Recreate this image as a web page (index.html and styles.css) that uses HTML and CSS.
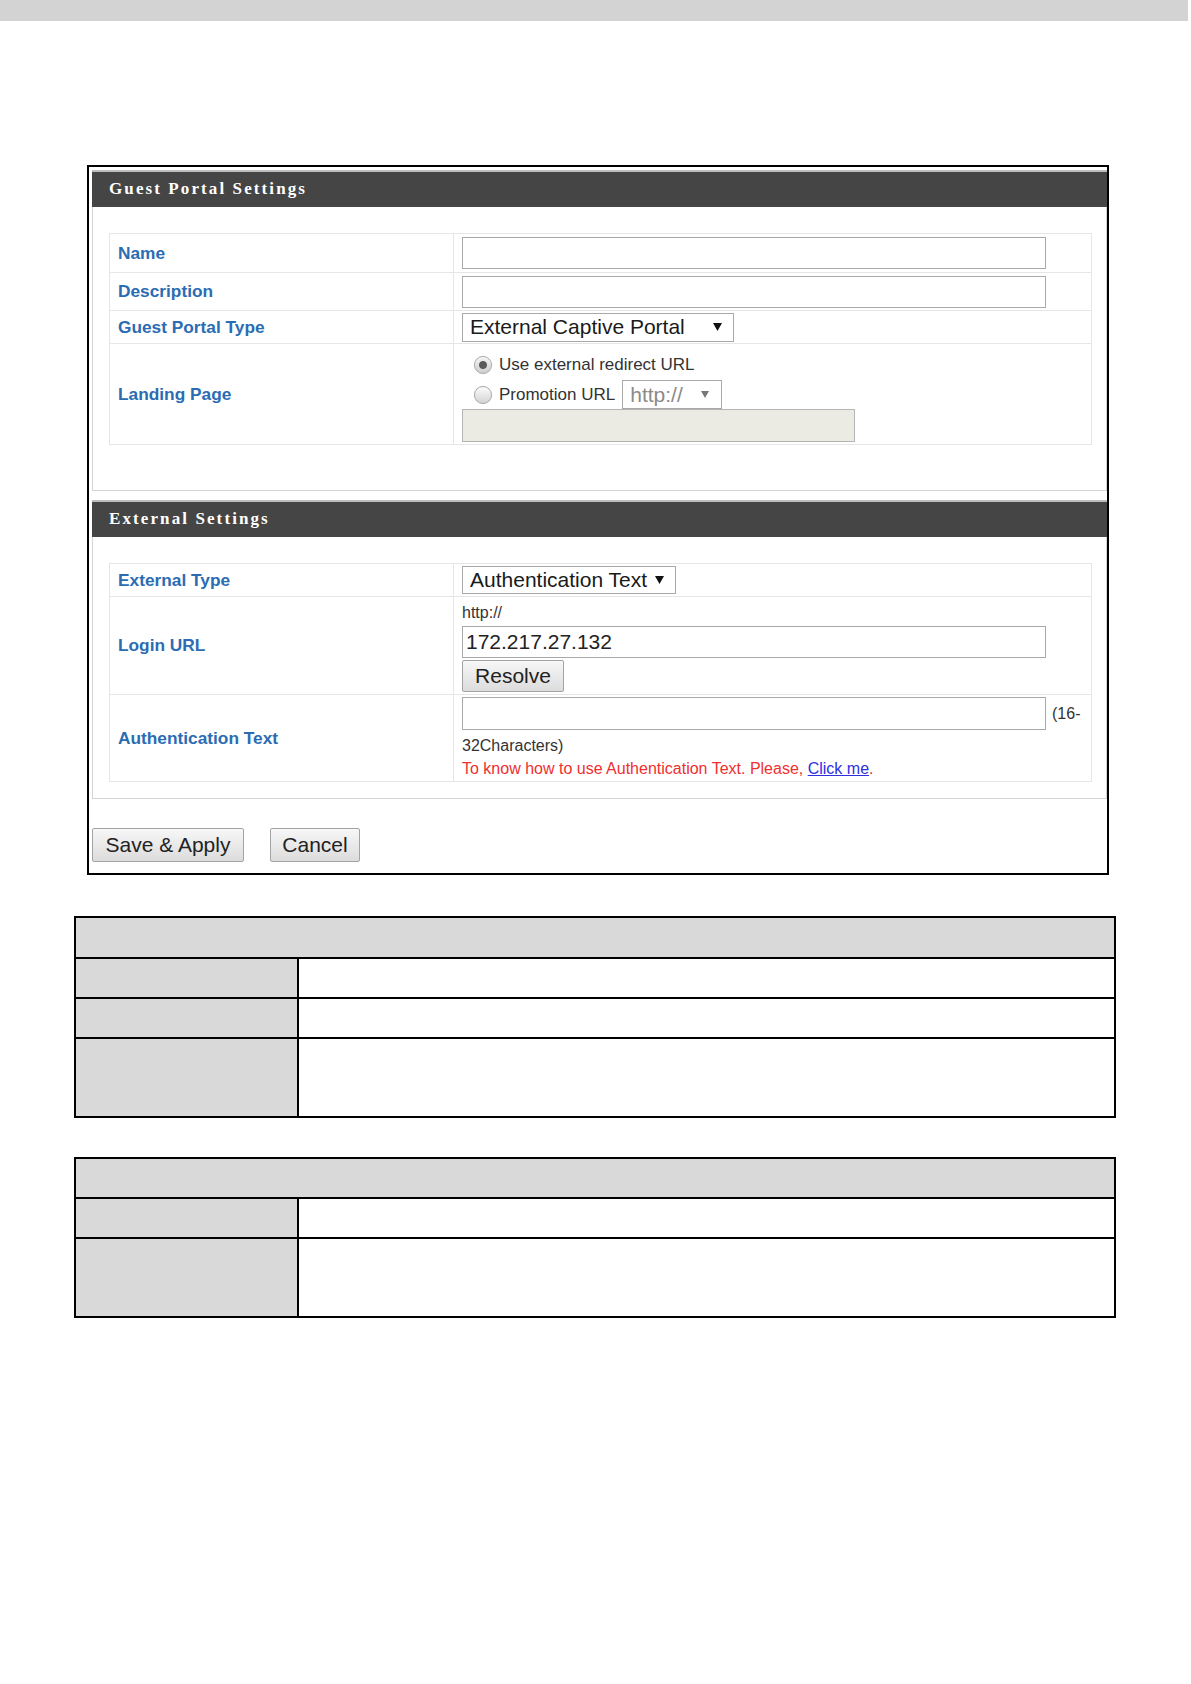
FILE: index.html
```html
<!DOCTYPE html>
<html>
<head>
<meta charset="utf-8">
<title>Guest Portal Settings</title>
<link rel="stylesheet" href="styles.css">
</head>
<body>
<div class="topbar"></div>

<div class="frame">
  <section class="panel">
    <div class="panel-head">Guest Portal Settings</div>
    <div class="panel-body body-first">
      <table class="form">
        <colgroup><col class="c-label"><col></colgroup>
        <tr class="h39">
          <td class="lbl">Name</td>
          <td class="val"><input class="txt" type="text"></td>
        </tr>
        <tr class="h38">
          <td class="lbl">Description</td>
          <td class="val"><input class="txt" type="text"></td>
        </tr>
        <tr class="h33">
          <td class="lbl">Guest Portal Type</td>
          <td class="val">
            <div class="select sel-type"><span>External Captive Portal</span><svg class="arrow" width="9" height="8" viewBox="0 0 9 8"><path d="M0 0H9L4.5 8Z"/></svg></div>
          </td>
        </tr>
        <tr class="h101">
          <td class="lbl">Landing Page</td>
          <td class="val val-landing">
            <div class="radio-line line1"><input class="radio" type="radio" name="lp" checked><span>Use external redirect URL</span></div>
            <div class="radio-line line2"><input class="radio" type="radio" name="lp"><span>Promotion URL</span>
              <div class="select sel-proto"><span>http://</span><svg class="arrow arrow-grey" width="8" height="7" viewBox="0 0 8 7"><path d="M0 0H8L4 7Z"/></svg></div>
            </div>
            <input class="txt txt-disabled" type="text" disabled>
          </td>
        </tr>
      </table>
    </div>
  </section>

  <section class="panel panel-second">
    <div class="panel-head">External Settings</div>
    <div class="panel-body body-second">
      <table class="form">
        <colgroup><col class="c-label"><col></colgroup>
        <tr class="h33">
          <td class="lbl">External Type</td>
          <td class="val">
            <div class="select sel-ext"><span>Authentication Text</span><svg class="arrow" width="9" height="8" viewBox="0 0 9 8"><path d="M0 0H9L4.5 8Z"/></svg></div>
          </td>
        </tr>
        <tr class="h98">
          <td class="lbl">Login URL</td>
          <td class="val val-login">
            <div class="proto">http://</div>
            <input class="txt" type="text" value="172.217.27.132">
            <button class="btn btn-resolve" type="button">Resolve</button>
          </td>
        </tr>
        <tr class="h87">
          <td class="lbl">Authentication Text</td>
          <td class="val val-auth">
            <div class="auth-row"><input class="txt" type="text"><span class="hint">(16-</span></div>
            <div class="chars">32Characters)</div>
            <div class="note">To know how to use Authentication Text. Please, <a class="link" href="#">Click me</a>.</div>
          </td>
        </tr>
      </table>
    </div>
  </section>

  <div class="actions">
    <button class="btn btn-save" type="button">Save &amp; Apply</button>
    <button class="btn btn-cancel" type="button">Cancel</button>
  </div>
</div>

<table class="spec spec-first">
  <colgroup><col class="s-label"><col></colgroup>
  <tr class="s41"><td class="s-head" colspan="2"></td></tr>
  <tr class="s40"><td class="s-key"></td><td></td></tr>
  <tr class="s40"><td class="s-key"></td><td></td></tr>
  <tr class="s79"><td class="s-key"></td><td></td></tr>
</table>

<table class="spec spec-second">
  <colgroup><col class="s-label"><col></colgroup>
  <tr class="s40"><td class="s-head" colspan="2"></td></tr>
  <tr class="s40"><td class="s-key"></td><td></td></tr>
  <tr class="s79"><td class="s-key"></td><td></td></tr>
</table>
</body>
</html>
```

FILE: styles.css
```css
html, body {
  margin: 0;
  padding: 0;
  background: #fff;
}

body {
  font-family: "Liberation Sans", Arial, sans-serif;
  color: #333;
}

.topbar {
  width: 1188px;
  height: 21px;
  background: #d3d3d3;
}

.frame {
  box-sizing: border-box;
  width: 1022px;
  height: 710px;
  margin: 144px 0 0 87px;
  border: 2px solid #000;
  padding: 3px 0 0 3px;
}

.panel-head {
  height: 35px;
  border-top: 2px solid #bdbdbd;
  background: #454545;
  color: #fff;
  font-family: "Liberation Serif", "Times New Roman", serif;
  font-weight: bold;
  font-size: 17px;
  line-height: 33px;
  letter-spacing: 2.1px;
  padding-left: 17px;
}

.panel-body {
  border: 1px solid #d4d4d4;
  border-top: none;
  padding: 26px 14px 45px 16px;
}

.panel-second {
  margin-top: 9px;
}

.body-second {
  padding-top: 26px;
  padding-bottom: 16px;
}

.form {
  width: 100%;
  border-collapse: collapse;
  table-layout: fixed;
}

.form td {
  border: 1px solid #e6e6e6;
  padding: 0 8px;
  vertical-align: middle;
}

.c-label {
  width: 344px;
}

.h39 { height: 39px; }
.h38 { height: 38px; }
.h33 { height: 33px; }
.h101 { height: 101px; }
.h98 { height: 98px; }
.h87 { height: 87px; }

.lbl {
  color: #2b6cb3;
  font-weight: bold;
  font-size: 17.3px;
}

.val {
  font-size: 17px;
}

.txt {
  display: block;
  box-sizing: border-box;
  width: 584px;
  height: 32px;
  margin: 0;
  border: 1px solid #a9a9a9;
  padding: 0 3px;
  background: #fff;
  font-family: "Liberation Sans", Arial, sans-serif;
  font-size: 21px;
  color: #222;
}

.select {
  box-sizing: border-box;
  display: flex;
  align-items: center;
  justify-content: space-between;
  border: 1px solid #a9a9a9;
  background: #fff;
  color: #1a1a1a;
  font-size: 21px;
  padding: 0 11px 0 7px;
}

.arrow {
  display: block;
  fill: #111;
}

.arrow-grey {
  fill: #777;
}

.sel-type {
  width: 272px;
  height: 29px;
}

.sel-ext {
  width: 214px;
  height: 28px;
}

.sel-proto {
  width: 100px;
  height: 29px;
  color: #8a8a8a;
  padding: 0 12px 0 7px;
  margin-left: 7px;
}

.form td.val-landing {
  vertical-align: top;
  padding-top: 8px;
  padding-bottom: 0;
}

.radio-line {
  display: flex;
  align-items: center;
  color: #333;
}

.line1 {
  height: 26px;
}

.line2 {
  height: 29px;
  margin-top: 2px;
}

.radio {
  appearance: none;
  -webkit-appearance: none;
  box-sizing: border-box;
  width: 18px;
  height: 18px;
  margin: 0 7px 0 12px;
  border: 1px solid #a8a8a8;
  border-radius: 50%;
  background: linear-gradient(#fbfbfb, #d4d4d4);
  box-shadow: inset 0 1px 1px #fff, 0 0 1px rgba(0,0,0,0.15);
}

.radio:checked {
  background: radial-gradient(circle, #5a5a5a 0, #5a5a5a 3.5px, rgba(90,90,90,0) 4.5px), linear-gradient(#f2f2f2, #cfcfcf);
}

.txt-disabled {
  width: 393px;
  height: 33px;
  background: #ebebe4;
  border-color: #b5b5b5;
}

.form td.val-login {
  vertical-align: top;
  padding-top: 3px;
}

.proto {
  font-size: 16px;
  line-height: 26px;
  height: 26px;
  color: #333;
}

.btn {
  box-sizing: border-box;
  height: 34px;
  margin: 0;
  border: 1px solid #a3a3a3;
  border-radius: 2px;
  background: linear-gradient(#f7f7f7, #dcdcdc);
  color: #222;
  font-family: "Liberation Sans", Arial, sans-serif;
  font-size: 21px;
  padding: 0;
}

.btn-resolve {
  display: block;
  width: 102px;
  height: 32px;
  margin-top: 2px;
}

.form td.val-auth {
  vertical-align: top;
  padding-top: 2px;
}

.auth-row {
  display: flex;
  align-items: center;
}

.auth-row .txt {
  height: 33px;
}

.hint {
  margin-left: 6px;
  font-size: 16px;
  color: #333;
}

.chars {
  margin-top: 4px;
  height: 23px;
  line-height: 23px;
  font-size: 16px;
  color: #333;
}

.note {
  height: 23px;
  line-height: 23px;
  font-size: 16px;
  color: #ef2f2f;
}

.link {
  color: #2f2fe0;
  text-decoration: underline;
}

.actions {
  display: flex;
  gap: 26px;
  margin-top: 29px;
}

.btn-save {
  width: 152px;
}

.btn-cancel {
  width: 90px;
}

.spec {
  width: 1042px;
  margin-left: 74px;
  border-collapse: collapse;
  table-layout: fixed;
}

.spec td {
  border: 2px solid #000;
  padding: 0;
}

.spec-first {
  margin-top: 41px;
}

.spec-second {
  margin-top: 39px;
}

.s-label {
  width: 223px;
}

.s41 { height: 41px; }
.s40 { height: 40px; }
.s79 { height: 79px; }

.s-head,
.s-key {
  background: #d9d9d9;
}
```
